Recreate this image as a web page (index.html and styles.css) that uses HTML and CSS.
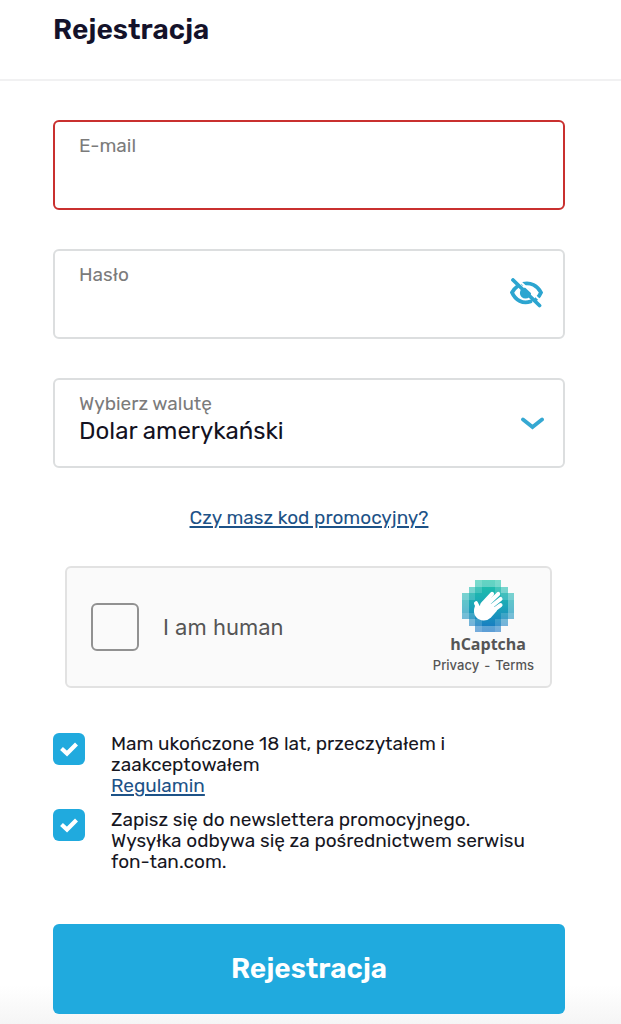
FILE: index.html
```html
<!DOCTYPE html>
<html lang="pl">
<head>
<meta charset="utf-8">
<meta name="viewport" content="width=device-width, initial-scale=1">
<title>Rejestracja</title>
<link rel="stylesheet" href="styles.css">
</head>
<body>
<header class="header"><h1 class="title">Rejestracja</h1></header>
<main>
<form class="form">
  <div class="field field-error">
    <div class="field-body">
      <label class="field-label" for="email">E-mail</label>
      <input class="field-control" id="email" type="email">
    </div>
  </div>
  <div class="field">
    <div class="field-body">
      <label class="field-label" for="password">Hasło</label>
      <input class="field-control" id="password" type="password">
    </div>
    <button class="reveal" type="button" aria-label="Pokaż hasło">
      <svg width="34" height="32" viewBox="0 0 34 32" fill="none" stroke="#2ca5d0" stroke-width="3.8" aria-hidden="true">
        <path d="M13 5.800C20.500 4 27.500 7.500 31 14.500C30 17 28.300 19.200 26.300 20.900" stroke-linecap="round"/>
        <path d="M7.200 8.500C5 10 3.300 12.200 2 14.500C5.500 22.500 13 26.200 20.500 23.500" stroke-linecap="round"/>
        <circle cx="15.500" cy="15" r="5.600" fill="#2ca5d0" stroke="none"/>
        <path d="M7 .5L34.500 26.500" stroke="#fff" stroke-width="2"/>
        <path d="M3 2L29.500 27.500" stroke-linecap="round"/>
      </svg>
    </button>
  </div>
  <div class="field">
    <div class="field-body">
      <label class="field-label" for="currency">Wybierz walutę</label>
      <select class="field-control" id="currency"><option>Dolar amerykański</option></select>
    </div>
    <svg class="chevron" width="24" height="14" viewBox="0 0 24 14" fill="none" aria-hidden="true"><path d="M3 3.500L12.500 11L22 3.500" stroke="#35a8d2" stroke-width="3.800" stroke-linecap="round"/></svg>
  </div>

  <a class="link promo" href="#promo">Czy masz kod promocyjny?</a>

  <div class="captcha">
    <label class="human"><input class="human-box" type="checkbox"><span>I am human</span></label>
    <div class="brand">
      <div class="brand-mark">
        <svg width="52" height="52" viewBox="0 0 32 32" aria-hidden="true">
          <defs><linearGradient id="tile" x1="0" y1="0" x2="0" y2="1"><stop offset="0" stop-color="#20c4a8"/><stop offset=".5" stop-color="#1ba5b8"/><stop offset="1" stop-color="#1873c4"/></linearGradient></defs>
          <g shape-rendering="crispEdges">
            <path fill="url(#tile)" d="M8 0h16v4h4v4h4v16h-4v4h-4v4H8v-4H4v-4H0V8h4V4h4z"/>
            <g fill="#fff">
              <path opacity=".4" d="M8 0h4v4H8zM20 0h4v4h-4zM4 4h4v4H4zM24 4h4v4h-4zM0 8h4v4H0zM28 8h4v4h-4zM0 20h4v4H0zM28 20h4v4h-4zM4 24h4v4H4zM24 24h4v4h-4zM8 28h4v4H8zM20 28h4v4h-4z"/>
              <path opacity=".3" d="M12 0h8v4h-8zM0 12h4v8H0zM28 12h4v8h-4zM12 28h8v4h-8z"/>
              <path opacity=".16" d="M8 4h4v4H8zM20 4h4v4h-4zM4 8h4v4H4zM24 8h4v4h-4zM4 20h4v4H4zM24 20h4v4h-4zM8 24h4v4H8zM20 24h4v4h-4z"/>
            </g>
          </g>
          <g fill="none" stroke="#fff" stroke-linecap="round" stroke-linejoin="round">
            <path stroke-width="2.500" d="M12.500 15L18.500 8.500M14.500 16L22.300 8.600M16.500 17.500L23.700 11.700M17.500 20L23.700 15.400M10.500 18L8.600 14.300"/>
            <path fill="#fff" stroke-width="2" d="M9 16C8 18.500 8 20.500 9.500 22.300C11.500 24.500 15 24.400 17.200 22.300L20.500 18.500L17 15.500L13.500 14L11 17.500Z"/>
          </g>
        </svg>
        <span class="brand-name">hCaptcha</span>
      </div>
      <span class="legal"><a href="#privacy">Privacy</a><span>-</span><a href="#terms">Terms</a></span>
    </div>
  </div>

  <div class="consents">
    <div class="consent">
      <span class="tick"><input class="tick-box" id="adult" type="checkbox" checked>
        <svg class="tick-mark" width="20" height="16" viewBox="0 0 20 16" fill="none" aria-hidden="true"><path d="M2.500 7.500L8 12.500L17.500 3" stroke="#fff" stroke-width="4.200"/></svg></span>
      <div><label for="adult">Mam ukończone 18 lat, przeczytałem i<br>zaakceptowałem</label><br><a class="link" href="#terms">Regulamin</a></div>
    </div>
    <div class="consent">
      <span class="tick"><input class="tick-box" id="news" type="checkbox" checked>
        <svg class="tick-mark" width="20" height="16" viewBox="0 0 20 16" fill="none" aria-hidden="true"><path d="M2.500 7.500L8 12.500L17.500 3" stroke="#fff" stroke-width="4.200"/></svg></span>
      <label for="news">Zapisz się do newslettera promocyjnego.<br>Wysyłka odbywa się za pośrednictwem serwisu<br>fon-tan.com.</label>
    </div>
  </div>

  <button class="submit" type="submit">Rejestracja</button>
</form>
</main>
</body>
</html>
```
FILE: styles.css
```css
* { box-sizing: border-box; }

body {
  margin: 0;
  background: #fff;
  color: #17171f;
  font: 19px/21px Rubik, Roboto, sans-serif;
}

.header {
  padding: 13px 56px 32px 53px;
  border-bottom: 2px solid #f1f1f2;
}

.title {
  margin: 0;
  font-size: 28px;
  line-height: 34px;
  font-weight: 600;
  color: #14122a;
}

.form {
  display: flex;
  flex-direction: column;
  padding: 39px 56px 11px 53px;
  background: linear-gradient(to top, #f5f5f5, #fff 40px);
}

.field {
  display: flex;
  align-items: center;
  min-height: 90px;
  margin-bottom: 39px;
  padding: 0 19px 0 24px;
  border: 2px solid #dcdedf;
  border-radius: 6px;
  background: #fff;
}

.field-error { border-color: #c9302f; }

.field-body {
  display: flex;
  flex: 1;
  flex-direction: column;
  min-width: 0;
  padding-bottom: 8px;
}

.field-label {
  font-size: 19px;
  line-height: 24px;
  color: #7b7b7b;
}

.field-control {
  width: 100%;
  height: 30px;
  padding: 0;
  border: 0;
  outline: 0;
  appearance: none;
  background: transparent;
  color: #14121f;
  font: 24px/30px Rubik, Roboto, sans-serif;
}

.reveal {
  display: flex;
  padding: 0;
  border: 0;
  background: none;
}

.chevron { flex: none; }

.link {
  color: #1d5287;
  text-decoration: underline;
  text-decoration-thickness: 2px;
  text-underline-offset: 2px;
}

.promo { align-self: center; }

.captcha {
  display: flex;
  align-items: center;
  justify-content: space-between;
  margin: 38px 13px 45px 12px;
  padding: 12px 16px 12px 24px;
  border: 2px solid #e2e2e2;
  border-radius: 6px;
  background: #fafafa;
  color: #555;
}

.human {
  display: flex;
  align-items: center;
  gap: 24px;
  font: 22px/28px Inter, sans-serif;
}

.human-box {
  width: 48px;
  height: 48px;
  margin: 0;
  appearance: none;
  border: 2px solid #919191;
  border-radius: 6px;
  background: #fafafa;
}

.brand {
  display: flex;
  flex-direction: column;
  align-items: flex-end;
}

.brand-mark {
  display: flex;
  flex-direction: column;
  align-items: center;
  margin-right: 8px;
}

.brand-name {
  font: 700 16px/24px "Open Sans", "Noto Sans", sans-serif;
}

.legal {
  display: flex;
  gap: 5px;
  font: 500 13px/18px Inter, sans-serif;
}

.legal a {
  color: inherit;
  text-decoration: none;
}

.consents {
  display: grid;
  gap: 13px;
  margin-bottom: 52px;
}

.consent {
  display: flex;
  align-items: flex-start;
  gap: 26px;
}

.tick {
  display: grid;
  flex: none;
  place-items: center;
}

.tick > * { grid-area: 1 / 1; }

.tick-box {
  width: 32px;
  height: 32px;
  margin: 0;
  appearance: none;
  border-radius: 6px;
  background: #20aade;
}

.tick-mark { pointer-events: none; }

.submit {
  min-height: 90px;
  border: 0;
  border-radius: 6px;
  background: #20aade;
  color: #fff;
  font: 600 28px/34px Rubik, Roboto, sans-serif;
}
```
